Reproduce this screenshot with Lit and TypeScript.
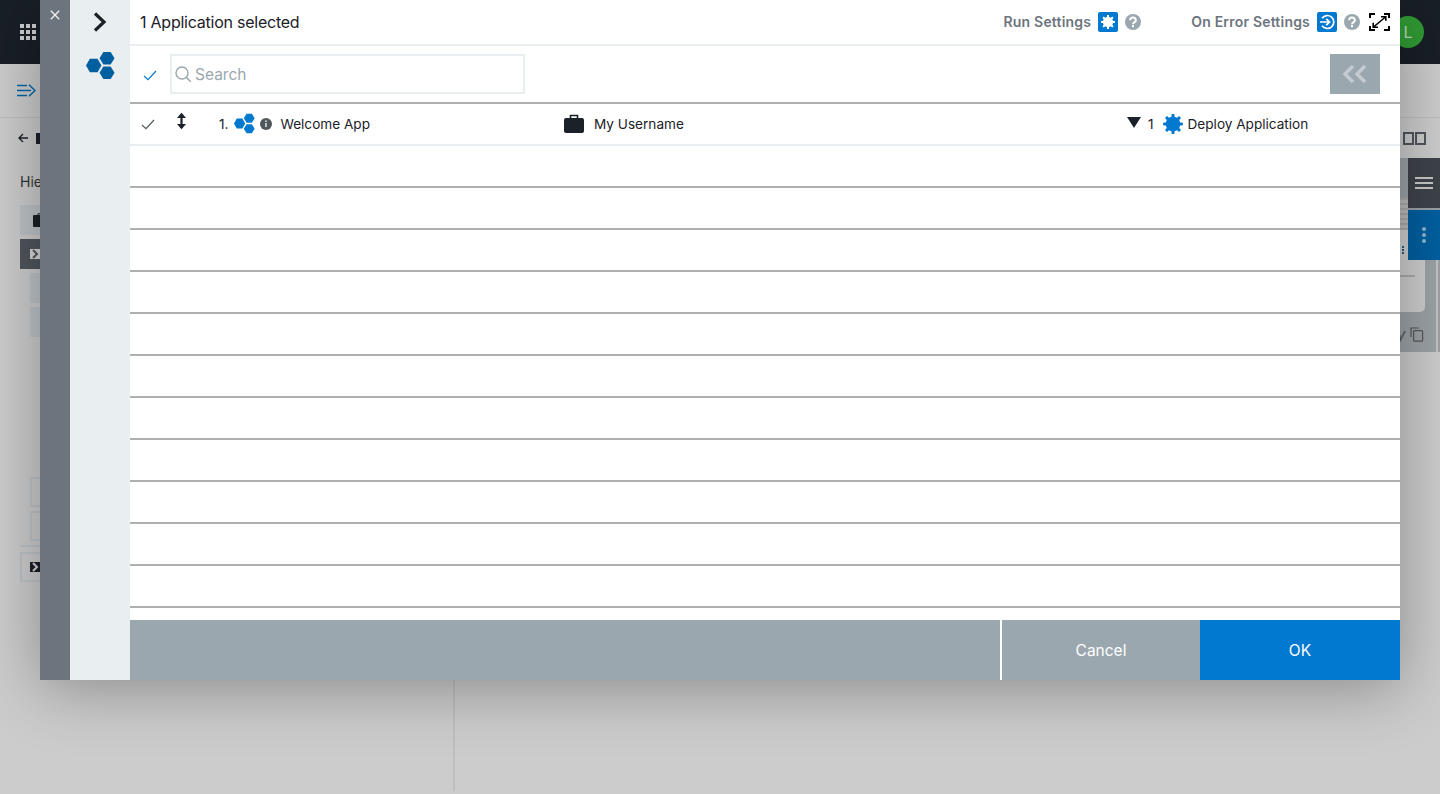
import { LitElement, html, css } from "lit";
import { customElement } from "lit/decorators.js";

function gearPoints(cx: number, cy: number, ro: number, ri: number, teeth: number): string {
  const pts: string[] = [];
  const step = (Math.PI * 2) / teeth;
  for (let i = 0; i < teeth; i++) {
    const a = i * step - Math.PI / 2;
    const w = step * 0.17;
    const mid = step * 0.27;
    for (const [ang, r] of [
      [a - w, ro],
      [a + w, ro],
      [a + mid, ri],
      [a + step - mid, ri],
    ] as [number, number][]) {
      pts.push(`${(cx + Math.cos(ang) * r).toFixed(2)},${(cy + Math.sin(ang) * r).toFixed(2)}`);
    }
  }
  return pts.join(" ");
}

const hexes = (w: number, h: number, color: string) => html`
  <svg width=${w} height=${h} viewBox="0 0 30 30" class="ico">
    <g fill=${color}>
      <polygon points="0,15 4,8 12,8 16,15 12,22 4,22" />
      <polygon points="14,7.5 18,1 25.5,1 29.5,7.5 25.5,14 18,14" />
      <polygon points="14,22.5 18,16 25.5,16 29.5,22.5 25.5,29 18,29" />
    </g>
  </svg>
`;

const gear = (size: number, color: string, hole: string, play = false) => html`
  <svg width=${size} height=${size} viewBox="0 0 20 20" class="ico">
    <polygon fill=${color} points=${gearPoints(10, 10, 10, 7.4, 8)} />
    ${play
      ? html`<path d="M7.6 6L13.6 10l-6 4z" fill=${hole} />`
      : html`<circle cx="10" cy="10" r="3.1" fill=${hole} />`}
  </svg>
`;

const help = html`
  <svg width="16" height="16" viewBox="0 0 16 16" class="ico">
    <circle cx="8" cy="8" r="8" fill="#9ba7ae" />
    <path d="M5.2 6.2a2.8 2.6 0 1 1 4.2 2.2c-.9.5-1.4.9-1.4 1.8" fill="none" stroke="#fff" stroke-width="2" />
    <rect x="7" y="11.2" width="2" height="2" fill="#fff" />
  </svg>
`;

const check = (color: string) => html`
  <svg width="14" height="11" viewBox="0 0 14 11" class="ico">
    <path d="M1 6l4 3.6L13 1" fill="none" stroke=${color} stroke-width="1.2" />
  </svg>
`;

const chip = (bg: string, fg: string) => html`
  <svg width="10" height="10" viewBox="0 0 10 10" class="ico">
    <rect width="10" height="10" fill=${bg} />
    <path d="M3 1l4 4-4 4" fill="none" stroke=${fg} stroke-width="2" />
  </svg>
`;

@customElement("app-root")
export class AppRoot extends LitElement {
  static styles = css`
    :host {
      display: block;
      width: 1440px;
      height: 794px;
      font-family: Inter, "Liberation Sans", sans-serif;
      color: #1b2129;
    }
    * { box-sizing: border-box; }
    .ico { display: block; flex: none; }
    .page {
      position: relative;
      width: 1440px;
      height: 794px;
      overflow: hidden;
      background: #cccccc;
    }
    .topbar {
      height: 64px;
      background: #191f27;
      display: flex;
      align-items: center;
      justify-content: space-between;
      padding: 0 16px 0 20px;
    }
    .grid-icon {
      display: grid;
      grid-template-columns: repeat(3, 4px);
      gap: 2px;
    }
    .grid-icon i { width: 4px; height: 4px; background: #cfcfcf; display: block; }
    .avatar {
      width: 32px;
      height: 32px;
      border-radius: 50%;
      background: #319b33;
      color: #b9d9b9;
      font-size: 16px;
      display: flex;
      align-items: center;
      justify-content: center;
    }
    .subbar {
      height: 54px;
      padding: 20px 0 0 17px;
      border-bottom: 1px solid #bdbdbd;
    }
    .body { padding: 0 0 0 18px; }
    .back { height: 54px; padding-top: 15px; display: flex; align-items: flex-start; gap: 8px; }
    .back b { display: block; width: 8px; height: 11px; background: #1b2129; }
    .hie { font-size: 14px; height: 34px; padding: 2px 0 0 2px; color: #333; margin-top: -1px; }
    .tile {
      height: 30px;
      width: 60px;
      margin: 0 0 4px 2px;
      background: #bcc3c7;
      display: flex;
      align-items: center;
      padding-left: 10px;
    }
    .tile.dark { background: #50565d; }
    .tile.sub { margin-left: 12px; }
    .tile.outline { background: none; border: 2px solid #bcc3c7; padding-left: 8px; }
    .spacer { height: 136px; }
    .rule { width: 60px; height: 2px; background: #bcc3c7; margin: 1px 0 5px 2px; }
    .brief-small { margin-left: 3px; }
    .vline {
      position: absolute;
      left: 453px;
      top: 670px;
      width: 2px;
      height: 121px;
      background: #bcc0c3;
    }
    .squares {
      position: absolute;
      left: 1403px;
      top: 132px;
      display: flex;
      gap: 1px;
    }
    .squares i { width: 11px; height: 13px; border: 2px solid #50565d; display: block; }
    .right-panel {
      position: absolute;
      left: 1400px;
      top: 158px;
      width: 40px;
      height: 194px;
      background: #9ba2a6;
    }
    .stripes {
      position: absolute;
      left: 0;
      top: 40px;
      width: 8px;
      height: 32px;
      background: repeating-linear-gradient(#a9a9a9 0 2px, #b9b9b9 2px 5px);
    }
    .card {
      position: absolute;
      left: 0;
      top: 72px;
      width: 25px;
      height: 82px;
      background: #cdcdcd;
      border-radius: 0 0 5px 0;
    }
    .card-rule { position: absolute; left: 0; top: 117px; width: 15px; height: 2px; background: #a9a9a9; }
    .edge { position: absolute; left: 36px; top: 102px; width: 2px; height: 92px; background: #c4c4c4; }
    .side-a, .side-b {
      position: absolute;
      left: 8px;
      width: 32px;
      height: 50px;
      display: flex;
      align-items: center;
      justify-content: center;
    }
    .side-a { top: 0; background: #3e434a; flex-direction: column; gap: 3px; }
    .side-a i { width: 18px; height: 2px; background: #c9c9c9; display: block; }
    .side-b { top: 52px; background: #005f9f; flex-direction: column; gap: 2px; }
    .side-b i { width: 4px; height: 4px; border-radius: 50%; background: #8fb7d2; display: block; }
    .mini-dots { position: absolute; left: 2px; top: 88px; display: flex; flex-direction: column; gap: 1px; }
    .mini-dots i { width: 2px; height: 2px; background: #1f5f8f; display: block; }
    .copy { position: absolute; left: -3px; top: 167px; display: flex; gap: 8px; align-items: center; }
    .copy span { font-size: 15px; color: #555; font-style: italic; width: 5px; }

    .modal {
      position: absolute;
      left: 40px;
      top: 0;
      width: 1360px;
      height: 680px;
      display: flex;
      background: #fff;
      box-shadow: 0 8px 60px rgba(0, 0, 0, 0.32);
    }
    .close {
      width: 30px;
      background: #6c747d;
      color: #f2f2f2;
      display: flex;
      justify-content: center;
      padding-top: 10px;
    }
    .nav {
      width: 60px;
      background: #e9eef1;
      display: flex;
      flex-direction: column;
      align-items: center;
      padding-top: 12px;
      gap: 19px;
    }
    .main { width: 1270px; display: flex; flex-direction: column; }
    .head {
      height: 46px;
      border-bottom: 2px solid #e9eef1;
      display: flex;
      align-items: center;
      padding: 0 10px 0 10px;
    }
    .title { font-size: 16px; letter-spacing: -0.24px; flex: 1; }
    .setting { display: flex; align-items: center; font-size: 14px; font-weight: 600; color: #6c747d; letter-spacing: 0.2px; }
    .setting .lbl { margin-right: 7px; padding-bottom: 2px; }
    .setting .sq {
      width: 20px;
      height: 20px;
      background: #0279d0;
      border-radius: 2px;
      display: flex;
      align-items: center;
      justify-content: center;
      margin-right: 7px;
    }
    .setting.run { margin-right: 50px; }
    .setting.err { margin-right: 9px; }
    .search-row {
      height: 58px;
      border-bottom: 2px solid #b0b0b0;
      display: flex;
      align-items: center;
      padding: 0 20px 0 13px;
    }
    .search-row .chk { width: 27px; padding-top: 2px; }
    .search {
      width: 355px;
      height: 40px;
      border: 2px solid #e9eef1;
      display: flex;
      align-items: center;
      padding-left: 3px;
      gap: 3px;
      font-size: 15.5px;
      color: #9ba7ae;
      flex: none;
    }
    .grow { flex: 1; }
    .collapse {
      width: 50px;
      height: 40px;
      background: #9ba7ae;
      display: flex;
      align-items: center;
      justify-content: center;
    }
    .rows { flex: 1; }
    .row {
      height: 42px;
      border-bottom: 2px solid #b0b0b0;
    }
    .row.first {
      display: grid;
      grid-template-columns: 40px 49px 345px 563px 1fr;
      align-items: center;
      font-size: 13.6px;
      border-bottom-color: #e9eef1;
      padding-bottom: 1px;
    }
    .cell { display: flex; align-items: center; }
    .cell.c1 { padding-left: 11px; padding-top: 2px; }
    .cell.c2 { padding-left: 6px; padding-bottom: 5px; }
    .num { margin-right: 6px; }
    .info { margin: 0 8px 0 5px; }
    .brief { margin-right: 10px; }
    .tri { margin-right: 7px; margin-bottom: 3px; }
    .cnt { margin-right: 9px; }
    .gear { margin-right: 5px; }
    .foot { height: 60px; display: flex; background: #9ba7ae; color: #fff; font-size: 15.5px; }
    .fill { width: 872px; border-right: 2px solid #fff; }
    .btn { display: flex; align-items: center; justify-content: center; }
    .cancel { width: 198px; }
    .ok { width: 200px; background: #0279d0; }
  `;

  private background() {
    return html`
      <div class="topbar">
        <div class="grid-icon">${Array.from({ length: 9 }, () => html`<i></i>`)}</div>
        <div class="avatar">L</div>
      </div>
      <div class="subbar">
        <svg width="19" height="13" viewBox="0 0 19 13" class="ico">
          <path d="M0 1.5h10M0 6.5h14M0 11.5h10M12 .8l6 5.7-6 5.7" fill="none" stroke="#0065a8" stroke-width="1.5" />
        </svg>
      </div>
      <div class="body">
        <div class="back">
          <svg width="10" height="10" viewBox="0 0 10 10" class="ico">
            <path d="M10 5H1M5 1L1 5l4 4" fill="none" stroke="#1b2129" stroke-width="1.3" />
          </svg>
          <b></b>
        </div>
        <div class="hie">Hierarchy</div>
        <div class="tile">
          <svg width="16" height="14" viewBox="0 0 16 14" class="ico brief-small">
            <path d="M5 2V.8h6V2" fill="none" stroke="#1b2129" />
            <rect y="2" width="16" height="12" rx="1" fill="#1b2129" />
          </svg>
        </div>
        <div class="tile dark">${chip("#d5d5d5", "#50565d")}</div>
        <div class="tile sub"></div>
        <div class="tile sub"></div>
        <div class="spacer"></div>
        <div class="tile sub outline"></div>
        <div class="tile sub outline"></div>
        <div class="rule"></div>
        <div class="tile outline">${chip("#1b2129", "#d5d5d5")}</div>
      </div>
      <div class="vline"></div>
      <div class="squares"><i></i><i></i></div>
      <div class="right-panel">
        <div class="stripes"></div>
        <div class="card"></div>
        <div class="card-rule"></div>
        <div class="edge"></div>
        <div class="mini-dots"><i></i><i></i><i></i></div>
        <div class="side-a"><i></i><i></i><i></i></div>
        <div class="side-b"><i></i><i></i><i></i></div>
        <div class="copy">
          <span>y</span>
          <svg width="14" height="15" viewBox="0 0 14 15" class="ico">
            <path d="M1 10V1h8" fill="none" stroke="#555" stroke-width="1.2" />
            <rect x="3.6" y="3.6" width="9" height="10.6" rx="1" fill="none" stroke="#555" stroke-width="1.2" />
          </svg>
        </div>
      </div>
    `;
  }

  render() {
    return html`
      <div class="page">
        ${this.background()}
        <div class="modal">
          <div class="close">
            <svg width="10" height="10" viewBox="0 0 10 10" class="ico">
              <path d="M.8.8l8.4 8.4M9.2.8L.8 9.2" stroke="#f2f2f2" stroke-width="1.3" fill="none" />
            </svg>
          </div>
          <div class="nav">
            <svg width="14" height="20" viewBox="0 0 14 20" class="ico">
              <path d="M2 1.5L11 10l-9 8.5" fill="none" stroke="#1b2129" stroke-width="3.2" />
            </svg>
            ${hexes(29, 29, "#005f9f")}
          </div>
          <div class="main">
            <div class="head">
              <div class="title">1 Application selected</div>
              <div class="setting run">
                <span class="lbl">Run Settings</span>
                <span class="sq">${gear(14, "#fff", "#0279d0", true)}</span>
                ${help}
              </div>
              <div class="setting err">
                <span class="lbl">On Error Settings</span>
                <span class="sq">
                  <svg width="16" height="16" viewBox="0 0 16 16" class="ico">
                    <path d="M3 4.2A6.5 6.5 0 1 1 3 11.8" fill="none" stroke="#fff" stroke-width="1.7" />
                    <path d="M1 8h9M7.2 4.8L10.6 8l-3.4 3.2" fill="none" stroke="#fff" stroke-width="1.7" />
                  </svg>
                </span>
                ${help}
              </div>
              <svg width="21" height="18" viewBox="0 0 21 18" class="ico">
                <path d="M1 5V1h5M15 1h5v4M20 13v4h-5M6 17H1v-4" fill="none" stroke="#000" stroke-width="2" />
                <path d="M4.5 14L16.5 4M12 3.8h4.8v4M4.2 9.8v4.4h4.8" fill="none" stroke="#000" stroke-width="1.6" />
              </svg>
            </div>
            <div class="search-row">
              <span class="chk">${check("#0279d0")}</span>
              <div class="search">
                <svg width="17" height="17" viewBox="0 0 17 17" class="ico">
                  <circle cx="7" cy="7" r="6" fill="none" stroke="#9ba7ae" stroke-width="1.4" />
                  <path d="M11.2 11.2l4.6 4.6" stroke="#9ba7ae" stroke-width="1.6" />
                </svg>
                <span>Search</span>
              </div>
              <div class="grow"></div>
              <div class="collapse">
                <svg width="26" height="20" viewBox="0 0 26 20" class="ico">
                  <path d="M11 2L3 10l8 8M23 2l-8 8 8 8" fill="none" stroke="#c3cbd0" stroke-width="3.4" />
                </svg>
              </div>
            </div>
            <div class="rows">
              <div class="row first">
                <div class="cell c1">${check("#50565d")}</div>
                <div class="cell c2">
                  <svg width="11" height="18" viewBox="0 0 11 18" class="ico">
                    <path d="M5.5 2v14" stroke="#1b2129" stroke-width="2.2" />
                    <path d="M1 6L5.5 .8 10 6zM1 12l4.5 5.2L10 12z" fill="#1b2129" />
                  </svg>
                </div>
                <div class="cell">
                  <span class="num">1.</span>
                  ${hexes(21, 21, "#0279d0")}
                  <svg class="ico info" width="12" height="12" viewBox="0 0 12 12">
                    <circle cx="6" cy="6" r="6" fill="#50565d" />
                    <path d="M6 5v4" stroke="#ddd" stroke-width="1.6" />
                    <rect x="5.2" y="2.4" width="1.6" height="1.6" fill="#ddd" />
                  </svg>
                  <span>Welcome App</span>
                </div>
                <div class="cell">
                  <svg class="ico brief" width="20" height="19" viewBox="0 0 20 19">
                    <path d="M6.5 4V1.5h7V4" fill="none" stroke="#1b2129" stroke-width="1.6" />
                    <rect x="0" y="4" width="20" height="15" rx="2" fill="#1b2129" />
                  </svg>
                  <span>My Username</span>
                </div>
                <div class="cell">
                  <svg class="ico tri" width="14" height="11" viewBox="0 0 14 11">
                    <path d="M0 0h14L7 11z" fill="#1b2129" />
                  </svg>
                  <span class="cnt">1</span>
                  <span class="gear">${gear(20, "#0279d0", "#fff")}</span>
                  <span>Deploy Application</span>
                </div>
              </div>
              ${Array.from({ length: 11 }, () => html`<div class="row"></div>`)}
            </div>
            <div class="foot">
              <div class="fill"></div>
              <div class="btn cancel">Cancel</div>
              <div class="btn ok">OK</div>
            </div>
          </div>
        </div>
      </div>
    `;
  }
}
